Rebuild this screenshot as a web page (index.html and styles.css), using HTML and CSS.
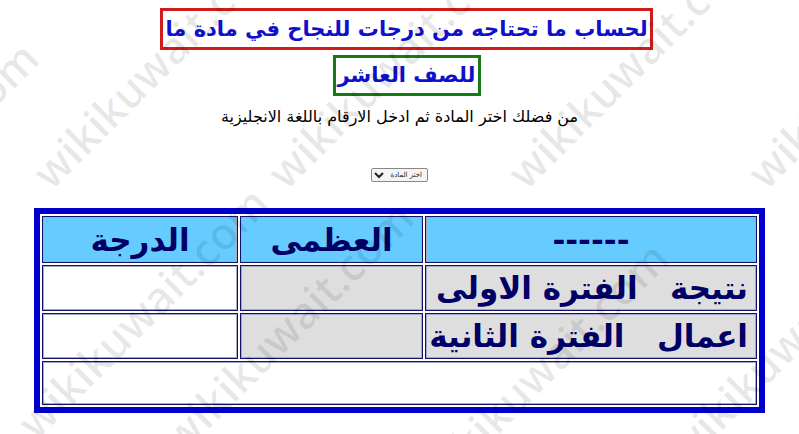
FILE: index.html
```html
<!DOCTYPE html>
<html lang="ar" dir="rtl">
<head>
<meta charset="utf-8">
<title>حساب الدرجات</title>
<link rel="stylesheet" href="styles.css">
</head>
<body>
<div class="page">
  <div class="title title-main">لحساب ما تحتاجه من درجات للنجاح في مادة ما</div>
  <div class="title title-sub">للصف العاشر</div>
  <p class="hint">من فضلك اختر المادة ثم ادخل الارقام باللغة الانجليزية</p>
  <div class="picker">
    <select class="subject"><option>اختر المادة</option></select>
  </div>
  <table class="grades">
    <tr class="head">
      <td class="c-label">------</td>
      <td class="c-max">العظمى</td>
      <td class="c-score">الدرجة</td>
    </tr>
    <tr class="row">
      <td class="c-label gray">نتيجة&nbsp;&nbsp; الفترة الاولى</td>
      <td class="c-max gray"></td>
      <td class="c-score"></td>
    </tr>
    <tr class="row">
      <td class="c-label gray">اعمال&nbsp;&nbsp; الفترة الثانية</td>
      <td class="c-max gray"></td>
      <td class="c-score"></td>
    </tr>
    <tr class="row last">
      <td colspan="3"></td>
    </tr>
  </table>
</div>
<div class="watermark" aria-hidden="true">
  <span class="wm" style="left:55px;top:195px">wikikuwait.com</span>
  <span class="wm" style="left:290px;top:195px">wikikuwait.com</span>
  <span class="wm" style="left:530px;top:195px">wikikuwait.com</span>
  <span class="wm" style="left:770px;top:195px">wikikuwait.com</span>
  <span class="wm" style="left:-190px;top:300px">wikikuwait.com</span>
  <span class="wm" style="left:40px;top:445px">wikikuwait.com</span>
  <span class="wm" style="left:185px;top:460px">wikikuwait.com</span>
  <span class="wm" style="left:440px;top:500px">wikikuwait.com</span>
  <span class="wm" style="left:690px;top:470px">wikikuwait.com</span>
</div>
</body>
</html>
```
FILE: styles.css
```css
html, body {
  margin: 0;
  padding: 0;
  background: #ffffff;
}
body {
  font-family: "DejaVu Sans", "Liberation Sans", sans-serif;
  position: relative;
  height: 434px;
  overflow: hidden;
}
.page {
  display: flex;
  flex-direction: column;
  align-items: center;
  padding-top: 8px;
}
.title {
  font-weight: bold;
  color: #1010cc;
  line-height: 36px;
  padding: 0 2px;
  white-space: nowrap;
  margin-left: 14px;
}
.title-main {
  border: 3px solid #d01c1c;
  font-size: 21px;
}
.title-sub {
  margin-top: 5px;
  border: 3px solid #167a16;
  font-size: 21px;
  line-height: 35px;
}
.hint {
  margin: 11px 0 0;
  font-size: 16px;
  line-height: 20px;
  color: #000;
}
.picker {
  margin-top: 41px;
  height: 14px;
  display: flex;
}
.subject {
  font-family: "DejaVu Sans", sans-serif;
  font-size: 7px;
  height: 14px;
  width: 57px;
  padding: 0 1px;
  border: 1px solid #888;
  border-radius: 2px;
  background: #f4f4f4;
  color: #222;
}
.grades {
  margin-top: 26px;
  width: 731px;
  border: 6px solid #0000cc;
  border-collapse: separate;
  border-spacing: 2px;
  table-layout: fixed;
  background: #fff;
}
.grades td {
  box-sizing: border-box;
  border: 1px solid #12126a;
  box-shadow: inset 0 0 0 1px #a8a8c0;
  padding: 0 8px;
  font-weight: bold;
  font-size: 31px;
  color: #000066;
  text-align: right;
  white-space: nowrap;
  overflow: hidden;
}
.head td {
  background: #66ccff;
  height: 47px;
  text-align: center;
}
.row td {
  height: 46px;
  background: #fff;
}
.row.last td {
  height: 44px;
}
.grades td.gray {
  background: #dedede;
}
.c-label { width: 332px; }
.c-max { width: 183px; }
.c-score { width: 196px; }
.watermark {
  position: absolute;
  inset: 0;
  overflow: hidden;
  pointer-events: none;
  direction: ltr;
}
.wm {
  position: absolute;
  font-family: "Open Sans", "DejaVu Sans", sans-serif;
  font-size: 44px;
  line-height: 44px;
  font-weight: 600;
  color: rgba(0, 0, 0, 0.09);
  white-space: nowrap;
  transform-origin: 0 100%;
  transform: translateY(-44px) rotate(-45deg);
}
```
